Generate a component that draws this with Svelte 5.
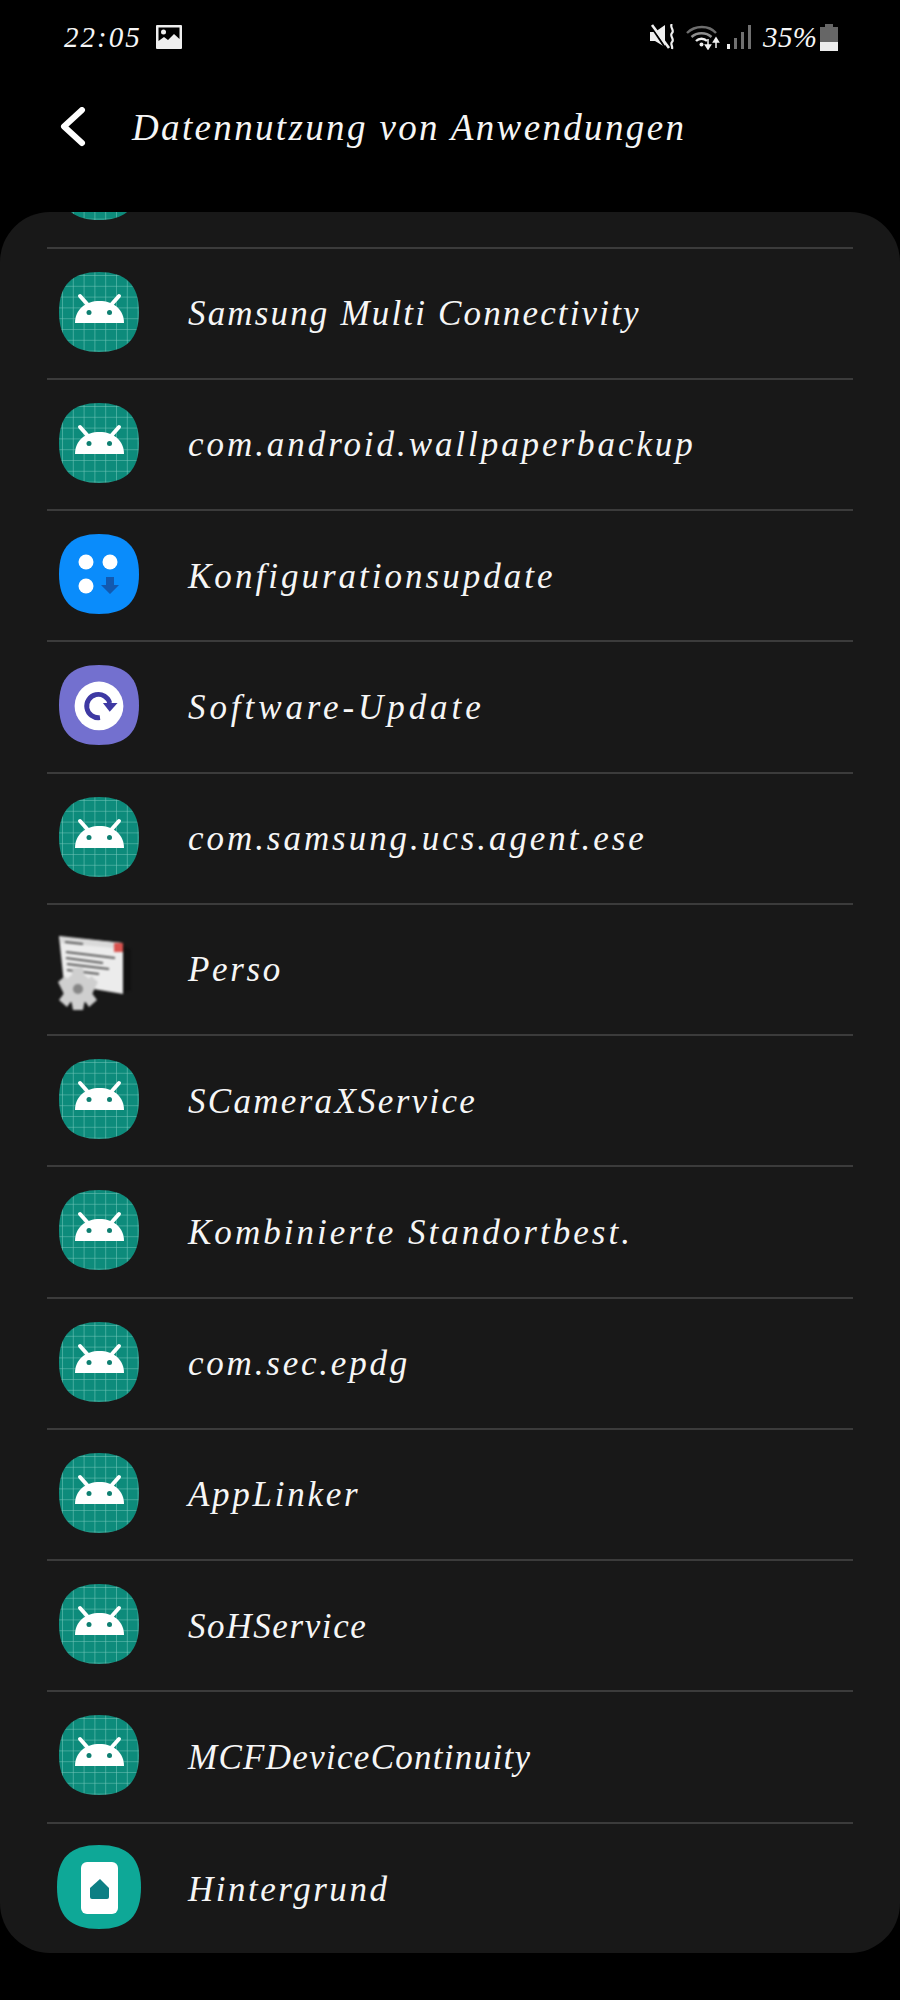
<script>
  const rows = [
    { name: 'Samsung Multi Connectivity', icon: 'android', track: 2.16 },
    { name: 'com.android.wallpaperbackup', icon: 'android', track: 2.94 },
    { name: 'Konfigurationsupdate', icon: 'blue', track: 3.02 },
    { name: 'Software-Update', icon: 'purple', track: 3.92 },
    { name: 'com.samsung.ucs.agent.ese', icon: 'android', track: 2.95 },
    { name: 'Perso', icon: 'perso', track: 2.62 },
    { name: 'SCameraXService', icon: 'android', track: 2.3 },
    { name: 'Kombinierte Standortbest.', icon: 'android', track: 3.02 },
    { name: 'com.sec.epdg', icon: 'android', track: 2.79 },
    { name: 'AppLinker', icon: 'android', track: 2.72 },
    { name: 'SoHService', icon: 'android', track: 1.62 },
    { name: 'MCFDeviceContinuity', icon: 'android', track: 1.29 },
    { name: 'Hintergrund', icon: 'home', track: 2.52 }
  ];
  const squircle = 'M40 0C67 0 80 13 80 40C80 67 67 80 40 80C13 80 0 67 0 40C0 13 13 0 40 0Z';
</script>

{#snippet android()}
  <svg class="icon" viewBox="0 0 80 80" aria-hidden="true">
    <path d={squircle} fill="url(#grid)" />
    <path d="M21 24L29 33M60 24L52 33" stroke="#fff" stroke-width="4" stroke-linecap="round" fill="none" />
    <path d="M16 51C16 37 27 29 40.500 29C54 29 65 37 65 51Z" fill="#fff" />
    <circle cx="30" cy="40.500" r="2.500" fill="#0e7f71" />
    <circle cx="50.500" cy="40.500" r="2.500" fill="#0e7f71" />
  </svg>
{/snippet}

{#snippet icon(kind)}
  {#if kind === 'android'}
    {@render android()}
  {:else if kind === 'blue'}
    <svg class="icon" viewBox="0 0 80 80" aria-hidden="true">
      <path d={squircle} fill="#0a8cfb" />
      <circle cx="27" cy="28" r="7.500" fill="#fff" />
      <circle cx="51" cy="28" r="7.500" fill="#fff" />
      <circle cx="27" cy="52" r="7.500" fill="#fff" />
      <path d="M47 43H55V51H60L51 60L42 51H47Z" fill="#1259b0" />
    </svg>
  {:else if kind === 'purple'}
    <svg class="icon" viewBox="-1 -1 82 82" aria-hidden="true">
      <path d="M40 -1C68 -1 81 12 81 40C81 68 68 81 40 81C12 81 -1 68 -1 40C-1 12 12 -1 40 -1Z" fill="#7370cf" />
      <circle cx="40" cy="41" r="25" fill="#fff" />
      <path d="M41 53A12 12 0 1 1 51 38" fill="none" stroke="#3e39a3" stroke-width="5" />
      <path d="M44 38H59L51 47Z" fill="#3e39a3" />
    </svg>
  {:else if kind === 'perso'}
    <svg class="icon perso" viewBox="0 0 80 80" aria-hidden="true">
      <path d="M62 17L72 22V62L60 66Z" fill="#121212" />
      <path d="M0 8L64 15V66L5 56Z" fill="#ececec" />
      <path d="M2 9L63 15V21L2 15Z" fill="#dadada" />
      <rect x="55" y="15" width="9" height="9" fill="#d9534f" />
      <path d="M6 14L24 16M7 24L56 30M7 30L44 35M8 36L50 41M8 42L40 46" stroke="#5a5a5a" stroke-width="1.800" />
      <g fill="#cfcfcf" transform="translate(-3 4)">
        <circle cx="22" cy="57" r="15" />
        <path d="M17 36H27L29 47H15ZM17 78H27L29 67H15ZM2 50L9 44L16 54L8 62ZM42 50L35 44L28 54L36 62ZM3 68L9 60L16 68L11 75ZM41 68L35 60L28 68L33 75Z" />
      </g>
      <circle cx="19" cy="61" r="5" fill="#868686" />
    </svg>
  {:else if kind === 'home'}
    <svg class="icon" viewBox="0 0 80 80" aria-hidden="true">
      <path d="M40 -2C69 -2 82 11 82 40C82 69 69 82 40 82C11 82 -2 69 -2 40C-2 11 11 -2 40 -2Z" fill="#0ea897" />
      <rect x="22" y="15" width="37" height="52" rx="6" fill="#fff" />
      <path d="M31 41L41 32L50 41V50A2 2 0 0 1 48 52H33A2 2 0 0 1 31 50Z" fill="#0d7f84" />
    </svg>
  {/if}
{/snippet}

<svg class="defs" aria-hidden="true">
  <defs>
    <pattern id="grid" width="10.800" height="10.800" patternUnits="userSpaceOnUse" x="3" y="3">
      <rect width="10.800" height="10.800" fill="#0d8b7b" />
      <path d="M0 0V10.800M0 0H10.800" stroke="#72c6b9" stroke-width="1.100" />
    </pattern>
  </defs>
</svg>

<div class="screen">
  <div class="status">
    <div class="status-left">
      <span class="time">22:05</span>
      <svg class="pic" viewBox="0 0 26 24" aria-hidden="true">
        <path fill-rule="evenodd" d="M1 0H25A1 1 0 0 1 26 1V23A1 1 0 0 1 25 24H1A1 1 0 0 1 0 23V1A1 1 0 0 1 1 0ZM2.500 2.500V16L8 12L12 15L18 9L23.500 14V2.500Z" fill="#efefef" />
        <circle cx="7.500" cy="7" r="2.500" fill="#efefef" />
      </svg>
    </div>
    <div class="status-right">
      <svg class="mute" viewBox="0 0 26 26" aria-hidden="true">
        <path d="M0 8H5L15 1V23L5 17H0Z" fill="#f0f0f0" />
        <path d="M0 1L16 25" stroke="#000" stroke-width="2" />
        <path d="M2 1L19 24" stroke="#f0f0f0" stroke-width="2.600" />
        <path d="M22 0C19 3 25 6 22 9C19 12 25 15 22 18C20 20 23 22 22 25" fill="none" stroke="#f0f0f0" stroke-width="2.200" />
      </svg>
      <svg class="wifi" viewBox="0 0 34 26" aria-hidden="true">
        <path d="M1 9C9 1 23 1 30 9" fill="none" stroke="#6e6e6e" stroke-width="2.400" />
        <path d="M5.500 13C11 8 20 8 25.500 13" fill="none" stroke="#8e8e8e" stroke-width="2.400" />
        <path d="M10 17C13 14 18 14 21 17" fill="none" stroke="#f0f0f0" stroke-width="2.400" />
        <circle cx="15.500" cy="20.500" r="2" fill="#f0f0f0" />
        <path d="M22 15V24M19.500 21L22 25L24.500 21Z" stroke="#f0f0f0" stroke-width="1.500" fill="#f0f0f0" />
        <path d="M30 24V15M27.500 18L30 14L32.500 18Z" stroke="#f0f0f0" stroke-width="1.500" fill="#f0f0f0" />
      </svg>
      <svg class="signal" viewBox="0 0 24 26" aria-hidden="true">
        <rect x="0" y="20" width="3" height="5" fill="#f0f0f0" />
        <rect x="7" y="14" width="3" height="11" fill="#707070" />
        <rect x="14" y="8" width="3" height="17" fill="#707070" />
        <rect x="21" y="1" width="3" height="24" fill="#707070" />
      </svg>
      <span class="pct">35%</span>
      <svg class="batt" viewBox="0 0 18 27" aria-hidden="true">
        <path d="M5 0H13V3H18V18H0V3H5Z" fill="#666" />
        <rect x="0" y="18" width="18" height="9" fill="#ececec" />
      </svg>
    </div>
  </div>

  <header class="bar">
    <svg class="back" viewBox="0 0 26 40" aria-hidden="true">
      <path d="M22 3L4 19.500L22 36" fill="none" stroke="#fff" stroke-width="6" stroke-linecap="round" stroke-linejoin="round" />
    </svg>
    <h1>Datennutzung von Anwendungen</h1>
  </header>

  <main class="panel">
    <div class="row sliver">{@render android()}</div>
    {#each rows as row, i}
      <div class="row" class:last={i === rows.length - 1}>
        <span class="slot">{@render icon(row.icon)}</span>
        <span class="label" style="letter-spacing:{row.track}px">{row.name}</span>
      </div>
    {/each}
  </main>
</div>

<style>
  :global(body) {
    margin: 0;
    background: #000;
  }
  .defs {
    display: block;
    width: 0;
    height: 0;
  }
  .screen {
    width: 900px;
    height: 2000px;
    background: #000;
    color: #f6f6f6;
    font-family: "Liberation Serif", "DejaVu Serif", serif;
    font-style: italic;
    overflow: hidden;
  }
  .status {
    height: 74px;
    box-sizing: border-box;
    padding: 23px 62px 0 64px;
    display: flex;
    justify-content: space-between;
    align-items: flex-start;
  }
  .status-left,
  .status-right {
    display: flex;
    align-items: center;
    height: 28px;
  }
  .time {
    font-size: 29px;
    letter-spacing: 2px;
    line-height: 28px;
    width: 92px;
  }
  .pic {
    width: 26px;
    height: 24px;
  }
  .mute {
    width: 26px;
    height: 26px;
    margin-right: 10px;
  }
  .wifi {
    width: 34px;
    height: 26px;
    margin-right: 7px;
  }
  .signal {
    width: 24px;
    height: 26px;
    margin-right: 12px;
  }
  .pct {
    font-size: 29px;
    letter-spacing: 0.4px;
    line-height: 28px;
    width: 57px;
  }
  .batt {
    width: 18px;
    height: 27px;
  }
  .bar {
    height: 106px;
    padding-left: 60px;
    box-sizing: border-box;
    display: flex;
    align-items: center;
    margin-bottom: 32px;
  }
  .back {
    width: 26px;
    height: 40px;
    margin-right: 46px;
  }
  h1 {
    margin: 0;
    font-size: 37px;
    font-weight: 400;
    letter-spacing: 2.35px;
    white-space: nowrap;
  }
  .panel {
    height: 1741px;
    background: #181818;
    border-radius: 50px;
    overflow: hidden;
    display: flex;
    flex-direction: column;
  }
  .row {
    height: 131.25px;
    flex: none;
    box-sizing: border-box;
    margin: 0 47px;
    border-bottom: 2px solid #3b3b3b;
    display: flex;
    align-items: center;
  }
  .sliver {
    height: 36.5px;
    overflow: hidden;
    align-items: flex-end;
    padding-left: 12px;
  }
  .sliver .icon {
    margin-bottom: 27px;
    flex: none;
  }
  .row.last {
    height: 130px;
    border-bottom: none;
  }
  .slot {
    width: 80px;
    height: 80px;
    margin: 0 49px 3px 12px;
    flex: none;
  }
  .icon {
    display: block;
    width: 80px;
    height: 80px;
    overflow: visible;
  }
  .perso {
    filter: blur(1.2px);
  }
  .label {
    font-size: 35px;
    white-space: nowrap;
    font-weight: 400;
    padding-top: 2px;
  }
</style>
